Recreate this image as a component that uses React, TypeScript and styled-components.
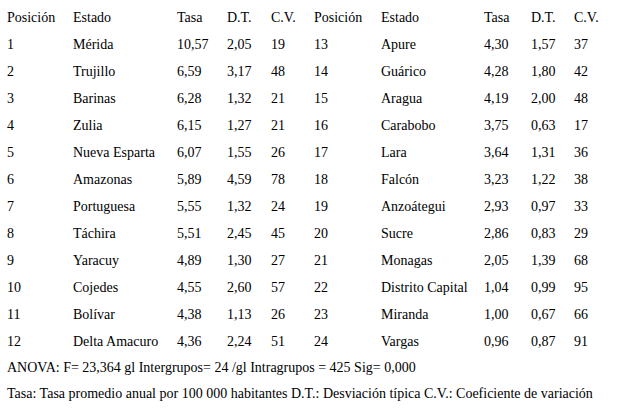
import { FC } from "react";
import styled, { createGlobalStyle } from "styled-components";

const GlobalStyle = createGlobalStyle`
  html, body {
    margin: 0;
    padding: 0;
    background: #fff;
  }
`;

const Page = styled.div`
  width: 618px;
  height: 413px;
  padding: 4px 0 0 7px;
  box-sizing: border-box;
  font-family: "Liberation Serif", "Times New Roman", serif;
  font-size: 14px;
  color: #000;
`;

const Table = styled.div`
  display: grid;
  grid-template-columns: 66px 104px 50px 44px 43px 67px 103px 47px 43px 44px;
  grid-auto-rows: 27.08px;
  align-items: center;
`;

const Cell = styled.div`
  white-space: nowrap;
  line-height: 16px;
`;

const Notes = styled.div`
  display: grid;
  grid-template-rows: 23.2px 30.2px;
  align-items: center;
`;

const Note = styled.div`
  white-space: nowrap;
  line-height: 16px;
`;

type Row = [string, string, string, string, string];

const left: Row[] = [
  ["1", "Mérida", "10,57", "2,05", "19"],
  ["2", "Trujillo", "6,59", "3,17", "48"],
  ["3", "Barinas", "6,28", "1,32", "21"],
  ["4", "Zulia", "6,15", "1,27", "21"],
  ["5", "Nueva Esparta", "6,07", "1,55", "26"],
  ["6", "Amazonas", "5,89", "4,59", "78"],
  ["7", "Portuguesa", "5,55", "1,32", "24"],
  ["8", "Táchira", "5,51", "2,45", "45"],
  ["9", "Yaracuy", "4,89", "1,30", "27"],
  ["10", "Cojedes", "4,55", "2,60", "57"],
  ["11", "Bolívar", "4,38", "1,13", "26"],
  ["12", "Delta Amacuro", "4,36", "2,24", "51"],
];

const right: Row[] = [
  ["13", "Apure", "4,30", "1,57", "37"],
  ["14", "Guárico", "4,28", "1,80", "42"],
  ["15", "Aragua", "4,19", "2,00", "48"],
  ["16", "Carabobo", "3,75", "0,63", "17"],
  ["17", "Lara", "3,64", "1,31", "36"],
  ["18", "Falcón", "3,23", "1,22", "38"],
  ["19", "Anzoátegui", "2,93", "0,97", "33"],
  ["20", "Sucre", "2,86", "0,83", "29"],
  ["21", "Monagas", "2,05", "1,39", "68"],
  ["22", "Distrito Capital", "1,04", "0,99", "95"],
  ["23", "Miranda", "1,00", "0,67", "66"],
  ["24", "Vargas", "0,96", "0,87", "91"],
];

const header = ["Posición", "Estado", "Tasa", "D.T.", "C.V."];

const App: FC = () => (
  <>
    <GlobalStyle />
    <Page>
      <Table>
        {[...header, ...header].map((h, i) => (
          <Cell key={`h${i}`}>{h}</Cell>
        ))}
        {left.map((row, r) =>
          [...row, ...right[r]].map((v, c) => <Cell key={`${r}-${c}`}>{v}</Cell>)
        )}
      </Table>
      <Notes>
        <Note>ANOVA: F= 23,364 gl Intergrupos= 24 /gl Intragrupos = 425 Sig= 0,000</Note>
        <Note>Tasa: Tasa promedio anual por 100 000 habitantes D.T.: Desviación típica C.V.: Coeficiente de variación</Note>
      </Notes>
    </Page>
  </>
);

export default App;
